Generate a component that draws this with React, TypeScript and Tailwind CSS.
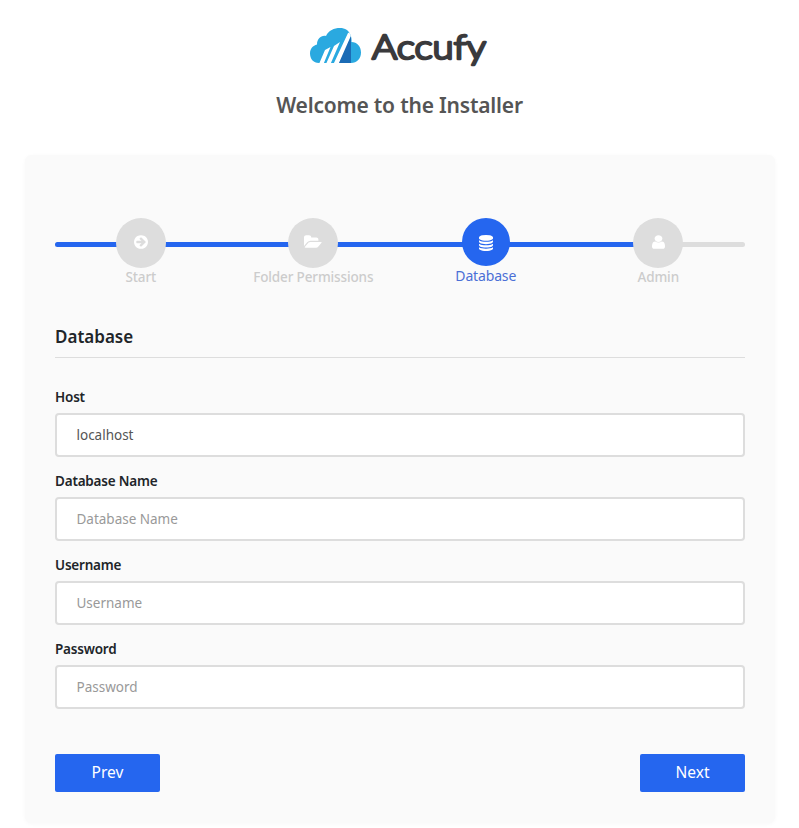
import type { ReactNode } from "react";

type Glyph = { box: string; width: string; path: string };

const glyphs: Record<string, Glyph> = {
  start: {
    box: "0 0 1536 1792",
    width: "w-[14px]",
    path: "M1285 896q0-27-18-45l-91-91-362-362q-18-18-45-18t-45 18l-91 91q-18 18-18 45t18 45l189 189h-502q-26 0-45 19t-19 45v128q0 26 19 45t45 19h502l-189 189q-19 19-19 45t19 45l91 91q18 18 45 18t45-18l362-362 91-91q18-18 18-45zm251 0q0 209-103 385.5t-279.5 279.5-385.5 103-385.5-103-279.5-279.5-103-385.5 103-385.5 279.5-279.5 385.5-103 385.5 103 279.5 279.5 103 385.5z",
  },
  folder: {
    box: "0 0 1920 1792",
    width: "w-[18px]",
    path: "M1879 952q0 31-31 66l-336 396q-43 51-120.5 86.5t-143.5 35.5h-1088q-34 0-60.5-13t-26.5-43q0-31 31-66l336-396q43-51 120.5-86.5t143.5-35.5h1088q34 0 60.5 13t26.5 43zm-343-344v160h-832q-94 0-197 47.5t-164 119.5l-337 396-5 6q0-4-.5-12.5t-.5-12.5v-960q0-92 66-158t158-66h320q92 0 158 66t66 158v32h544q92 0 158 66t66 158z",
  },
  database: {
    box: "0 0 1536 1792",
    width: "w-[14px]",
    path: "M768 768q237 0 443-43t325-127v170q0 69-103 128t-280 93.5-385 34.5-385-34.5-280-93.5-103-128v-170q119 84 325 127t443 43zm0 768q237 0 443-43t325-127v170q0 69-103 128t-280 93.5-385 34.5-385-34.5-280-93.5-103-128v-170q119 84 325 127t443 43zm0-384q237 0 443-43t325-127v170q0 69-103 128t-280 93.5-385 34.5-385-34.5-280-93.5-103-128v-170q119 84 325 127t443 43zm0-1152q208 0 385 34.5t280 93.5 103 128v128q0 69-103 128t-280 93.5-385 34.5-385-34.5-280-93.5-103-128v-128q0-69 103-128t280-93.5 385-34.5z",
  },
  user: {
    box: "0 0 1280 1792",
    width: "w-[13px]",
    path: "M1280 1399q0 109-62.5 187t-150.5 78h-854q-88 0-150.5-78t-62.5-187q0-85 8.5-160.5t31.5-152 58.5-131 94-89 134.5-34.5q131 128 313 128t313-128q76 0 134.5 34.5t94 89 58.5 131 31.5 152 8.5 160.5zm-256-887q0 159-112.5 271.5t-271.5 112.5-271.5-112.5-112.5-271.5 112.5-271.5 271.5-112.5 271.5 112.5 112.5 271.5z",
  },
};

function Step({ icon, children, active = false }: { icon: string; children: ReactNode; active?: boolean }) {
  const g = glyphs[icon];
  return (
    <div className="flex w-[172.5px] flex-col items-center">
      <div
        className={
          active
            ? "flex h-12 w-12 justify-center rounded-full bg-[#2566ef] pt-[17px]"
            : "flex h-[50px] w-[50px] justify-center rounded-full bg-[#ddd] pt-4"
        }
      >
        <svg viewBox={g.box} className={`${g.width} h-4`} preserveAspectRatio="none" fill="#fff">
          <path d={g.path} />
        </svg>
      </div>
      <div
        className={
          active
            ? "text-[14px] leading-[19px] tracking-[-0.15px] text-[#4a6fd6]"
            : "text-[13.5px] leading-[19px] font-medium tracking-[-0.13px] whitespace-nowrap text-[#ccc]"
        }
      >
        {children}
      </div>
    </div>
  );
}

function Field({ label, value }: { label: string; value?: string }) {
  return (
    <label className="block h-[84px]">
      <span className="block h-[26px] text-[13.5px] leading-5 font-semibold tracking-[-0.2px] text-[#212529]">{label}</span>
      <input
        className="block h-11 w-full rounded-[4px] border-2 border-[#ddd] bg-white px-[19.5px] pb-px text-[13.5px] tracking-[-0.01px] text-[#555] outline-none placeholder:text-[#999]"
        defaultValue={value}
        placeholder={label}
      />
    </label>
  );
}

function Logo() {
  return (
    <svg width="182" height="46" viewBox="0 0 182 46" className="block overflow-visible">
      <defs>
        <clipPath id="cloud">
          <path d="M10 36C4 36 1 31.500 1 26.500C1 21.500 4 18.500 8 17.500C8 12 12 8 17 9C19.500 3.500 25 1 31 1C36 1 40 3.500 41.500 8C42.500 10.500 42.800 13 42.500 15C48 15 52 19.500 52 25.500C52 31.500 48 36 42 36Z" />
        </clipPath>
      </defs>
      <g clipPath="url(#cloud)">
        <rect width="54" height="38" fill="#2aa9e0" />
        <path d="M42 9V37H27Z" fill="#1b6bb5" />
        <path d="M10 37L16 23L21.500 20L14.500 37ZM17 37L25 19L31 15L21.500 37ZM24.500 37L39 6L44 4L29.500 37Z" fill="#fff" />
      </g>
      <text
        x="63"
        y="31.500"
        fontSize="34"
        fontFamily="Lato, sans-serif"
        fontWeight="300"
        textLength="114"
        lengthAdjust="spacingAndGlyphs"
        fill="#3a3a3c"
        stroke="#3a3a3c"
        strokeWidth="2.6"
        strokeLinejoin="round"
      >
        Accufy
      </text>
    </svg>
  );
}

export default function App() {
  return (
    <main className="flex h-[828px] w-[799px] flex-col overflow-hidden bg-white font-['Noto_Sans',sans-serif]">
      <header className="flex h-[155px] flex-col items-center pt-[27px]">
        <Logo />
        <h1 className="mt-[17px] text-[21px] leading-[30px] font-semibold tracking-[-0.2px] text-[#555]">
          Welcome to the Installer
        </h1>
      </header>
      <section className="mx-[25px] h-[668px] w-[750px] rounded-[6px] bg-[#fafafa] px-[30px] pt-[63px] shadow-[0_1px_4px_rgba(0,0,0,0.03)]">
        <div className="relative flex h-[109px]">
          <div className="absolute top-6 left-0 h-[5px] w-full overflow-hidden rounded-[3px] bg-[#ddd]">
            <div className="h-full w-[600px] bg-[#2566ef]" />
          </div>
          <div className="relative -ml-[0.5px] flex w-full items-start">
            <Step icon="start">Start</Step>
            <Step icon="folder">Folder Permissions</Step>
            <Step icon="database" active>Database</Step>
            <Step icon="user">Admin</Step>
          </div>
        </div>
        <h2 className="h-[31px] border-b border-[#ddd] text-[17px] leading-5 font-semibold text-[#212529]">Database</h2>
        <form className="pt-[29px]">
          <Field label="Host" value="localhost" />
          <Field label="Database Name" />
          <Field label="Username" />
          <Field label="Password" />
          <div className="flex justify-between pt-[31px]">
            <button type="button" className="h-[38px] w-[105px] rounded-[2px] bg-[#2566ef] text-[15.5px] text-white">Prev</button>
            <button type="button" className="h-[38px] w-[105px] rounded-[2px] bg-[#2566ef] text-[15.5px] text-white">Next</button>
          </div>
        </form>
      </section>
    </main>
  );
}
